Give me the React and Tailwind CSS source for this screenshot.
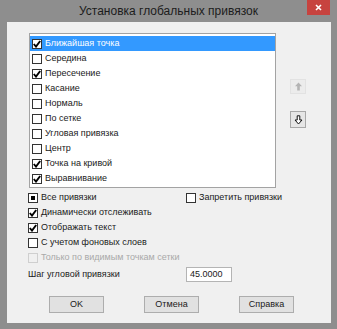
import React from 'react';

const ITEMS = [
  { label: 'Ближайшая точка', checked: true, selected: true },
  { label: 'Середина', checked: false },
  { label: 'Пересечение', checked: true },
  { label: 'Касание', checked: false },
  { label: 'Нормаль', checked: false },
  { label: 'По сетке', checked: false },
  { label: 'Угловая привязка', checked: false },
  { label: 'Центр', checked: false },
  { label: 'Точка на кривой', checked: true },
  { label: 'Выравнивание', checked: true },
];

function Box({ state, disabled }) {
  return (
    <span
      className={
        'flex h-[10px] w-[10px] shrink-0 items-center justify-center border ' +
        (disabled ? 'border-[#cfcfcf] bg-[#f0f0f0]' : 'border-[#333] bg-white')
      }
    >
      {state === 'checked' && (
        <svg width="8" height="8" viewBox="0 0 8 8">
          <path d="M0.8 4 L3 6.6 L7.2 1" fill="none" stroke="#000" strokeWidth="1.9" />
        </svg>
      )}
      {state === 'mixed' && <span className="h-[4px] w-[4px] bg-black" />}
    </span>
  );
}

function Check({ label, state, disabled }) {
  return (
    <div className="flex h-[15px] items-center gap-[3px]">
      <Box state={state} disabled={disabled} />
      <span className={disabled ? 'text-[#a9a9a9]' : 'text-[#1a1a1a]'}>{label}</span>
    </div>
  );
}

function Btn({ children }) {
  return (
    <div className="flex h-[17px] w-[55px] items-center justify-center border border-[#adadad] bg-[#e1e1e1] text-[#1a1a1a]">
      {children}
    </div>
  );
}

export default function App() {
  return (
    <div
      className="flex h-[329px] w-[337px] flex-col bg-[#8e8e8e] text-[9px] leading-none"
      style={{ fontFamily: '"Liberation Sans", Arial, sans-serif' }}
    >
      {/* Title bar */}
      <div className="relative flex h-[22px] items-center justify-center text-[12px] text-[#1c1c1c]">
        Установка глобальных привязок
        <div className="absolute right-[7px] top-0 flex h-[15px] w-[23px] items-center justify-center bg-[#c7433f]">
          <svg width="7" height="7" viewBox="0 0 7 7">
            <path d="M1 1 L6 6 M6 1 L1 6" stroke="#fff" strokeWidth="1.6" />
          </svg>
        </div>
      </div>

      {/* Client area */}
      <div className="mx-[7px] flex h-[301px] w-[324px] flex-col bg-[#f0f0f0] pl-[21px] pt-[11px]">
        <div className="flex">
          <div className="ml-px h-[155px] w-[247px] border border-[#a3a3a3] bg-white pt-[2px]">
            {ITEMS.map((it) => (
              <div
                key={it.label}
                className={
                  'flex h-[15px] items-center gap-[3px] pl-[2px] ' +
                  (it.selected ? 'bg-[#3399ff] text-white' : 'text-[#1a1a1a]')
                }
              >
                <Box state={it.checked ? 'checked' : 'none'} />
                <span>{it.label}</span>
              </div>
            ))}
          </div>
          <div className="ml-[14px] flex flex-col pt-[46px]">
            <div className="flex h-[15px] w-[16px] items-center justify-center border border-[#e2e2e2] bg-[#ececec]">
              <svg width="9" height="9" viewBox="0 0 9 9">
                <path d="M4.5 0.5 L8 4.2 L5.8 4.2 L5.8 8.5 L3.2 8.5 L3.2 4.2 L1 4.2 Z" fill="#b4b4b4" />
              </svg>
            </div>
            <div className="mt-[17px] flex h-[17px] w-[16px] items-center justify-center border border-[#a8a8a8] bg-[#e6e6e6]">
              <svg width="9" height="10" viewBox="0 0 9 10">
                <path d="M3.2 0.8 L5.8 0.8 L5.8 5 L8 5 L4.5 9 L1 5 L3.2 5 Z" fill="#fff" stroke="#111" strokeWidth="1" />
              </svg>
            </div>
          </div>
        </div>

        <div className="mt-[2px] flex">
          <div className="flex w-[158px] flex-col">
            <Check label="Все привязки" state="mixed" />
            <Check label="Динамически отслеживать" state="checked" />
            <Check label="Отображать текст" state="checked" />
            <Check label="С учетом фоновых слоев" state="none" />
            <Check label="Только по видимым точкам сетки" state="none" disabled />
          </div>
          <div className="flex flex-col">
            <Check label="Запретить привязки" state="none" />
          </div>
        </div>

        <div className="mt-[2px] flex items-center">
          <span className="w-[158px] text-[#1a1a1a]">Шаг угловой привязки</span>
          <div className="flex h-[15px] w-[46px] items-center border border-[#b4b4b4] bg-white pl-[3px] text-[#1a1a1a]">
            45.0000
          </div>
        </div>

        <div className="ml-[21px] mt-[14px] flex gap-[40px]">
          <Btn>OK</Btn>
          <Btn>Отмена</Btn>
          <Btn>Справка</Btn>
        </div>
      </div>
    </div>
  );
}
